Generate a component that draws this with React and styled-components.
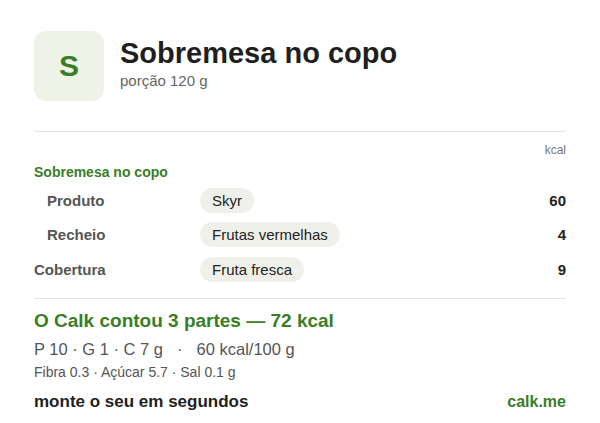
import styled, { createGlobalStyle } from 'styled-components';

const GlobalStyle = createGlobalStyle`
    body {
        margin: 0;
        background: #ffffff;
        font-family: 'Liberation Sans', Arial, Helvetica, sans-serif;
    }
`;

const rows = [
    { label: 'Produto', item: 'Skyr', kcal: 60, nested: true },
    { label: 'Recheio', item: 'Frutas vermelhas', kcal: 4, nested: true },
    { label: 'Cobertura', item: 'Fruta fresca', kcal: 9, nested: false },
];

const App = () => {
    return (
        <Card>
            <GlobalStyle />
            <Header>
                <Logo>S</Logo>
                <TitleBlock>
                    <Title>Sobremesa no copo</Title>
                    <Portion>porção 120 g</Portion>
                </TitleBlock>
            </Header>
            <Divider />
            <UnitRow>kcal</UnitRow>
            <GroupTitle>Sobremesa no copo</GroupTitle>
            {rows.map((r) => (
                <Row key={r.label}>
                    <Label $nested={r.nested}>{r.label}</Label>
                    <PillCell>
                        <Pill>{r.item}</Pill>
                    </PillCell>
                    <Kcal>{r.kcal}</Kcal>
                </Row>
            ))}
            <Divider $gap={11} />
            <Summary>O Calk contou 3 partes — 72 kcal</Summary>
            <Macros>
                <span>P 10 · G 1 · C 7 g</span>
                <Dot>·</Dot>
                <span>60 kcal/100 g</span>
            </Macros>
            <Micros>Fibra 0.3 · Açúcar 5.7 · Sal 0.1 g</Micros>
            <Footer>
                <Cta>monte o seu em segundos</Cta>
                <Brand>calk.me</Brand>
            </Footer>
        </Card>
    );
};

export default App;

const Card = styled.div`
    width: 600px;
    height: 423px;
    box-sizing: border-box;
    padding: 31px 34px 0 34px;
    background: #ffffff;
`;

const Header = styled.div`
    display: flex;
    align-items: center;
    gap: 16px;
`;

const Logo = styled.div`
    width: 70px;
    height: 70px;
    border-radius: 12px;
    background: #eef2e7;
    color: #3a7d27;
    font-size: 30px;
    font-weight: 700;
    display: flex;
    align-items: center;
    justify-content: center;
    flex-shrink: 0;
`;

const TitleBlock = styled.div`
    display: flex;
    flex-direction: column;
    margin-top: -7px;
`;

const Title = styled.h1`
    margin: 0;
    font-size: 29px;
    line-height: 34px;
    font-weight: 700;
    color: #1f1f1f;
`;

const Portion = styled.div`
    font-size: 15px;
    line-height: 18px;
    color: #666666;
    margin-top: 2px;
`;

const Divider = styled.div`
    height: 1px;
    background: #e3e3e3;
    margin-top: ${(p) => (p.$gap ? `${p.$gap}px` : '30px')};
`;

const UnitRow = styled.div`
    text-align: right;
    font-size: 12px;
    line-height: 14px;
    color: #777777;
    margin-top: 11px;
`;

const GroupTitle = styled.div`
    font-size: 14px;
    line-height: 17px;
    font-weight: 700;
    color: #3a7d27;
    margin-top: 7px;
    margin-bottom: 2px;
`;

const Row = styled.div`
    display: grid;
    grid-template-columns: 166px 1fr auto;
    align-items: center;
    height: 34.5px;
`;

const Label = styled.div`
    font-size: 15px;
    font-weight: 700;
    color: #555555;
    padding-left: ${(p) => (p.$nested ? '13px' : '0')};
`;

const PillCell = styled.div`
    display: flex;
`;

const Pill = styled.span`
    display: inline-block;
    background: #f0f0ea;
    border-radius: 999px;
    padding: 4px 12px;
    font-size: 15px;
    line-height: 17px;
    color: #222222;
`;

const Kcal = styled.div`
    font-size: 15px;
    font-weight: 700;
    color: #222222;
    text-align: right;
`;

const Summary = styled.div`
    font-size: 19px;
    line-height: 22px;
    font-weight: 700;
    color: #3a7d27;
    margin-top: 11px;
`;

const Macros = styled.div`
    display: flex;
    font-size: 16.5px;
    line-height: 20px;
    color: #555555;
    margin-top: 7px;
`;

const Dot = styled.span`
    padding: 0 14px;
`;

const Micros = styled.div`
    font-size: 14px;
    line-height: 17px;
    color: #555555;
    margin-top: 5px;
`;

const Footer = styled.div`
    display: flex;
    justify-content: space-between;
    align-items: baseline;
    margin-top: 11px;
    line-height: 20px;
`;

const Cta = styled.div`
    font-size: 17px;
    font-weight: 700;
    color: #1f1f1f;
`;

const Brand = styled.div`
    font-size: 16px;
    font-weight: 700;
    color: #3a7d27;
`;
